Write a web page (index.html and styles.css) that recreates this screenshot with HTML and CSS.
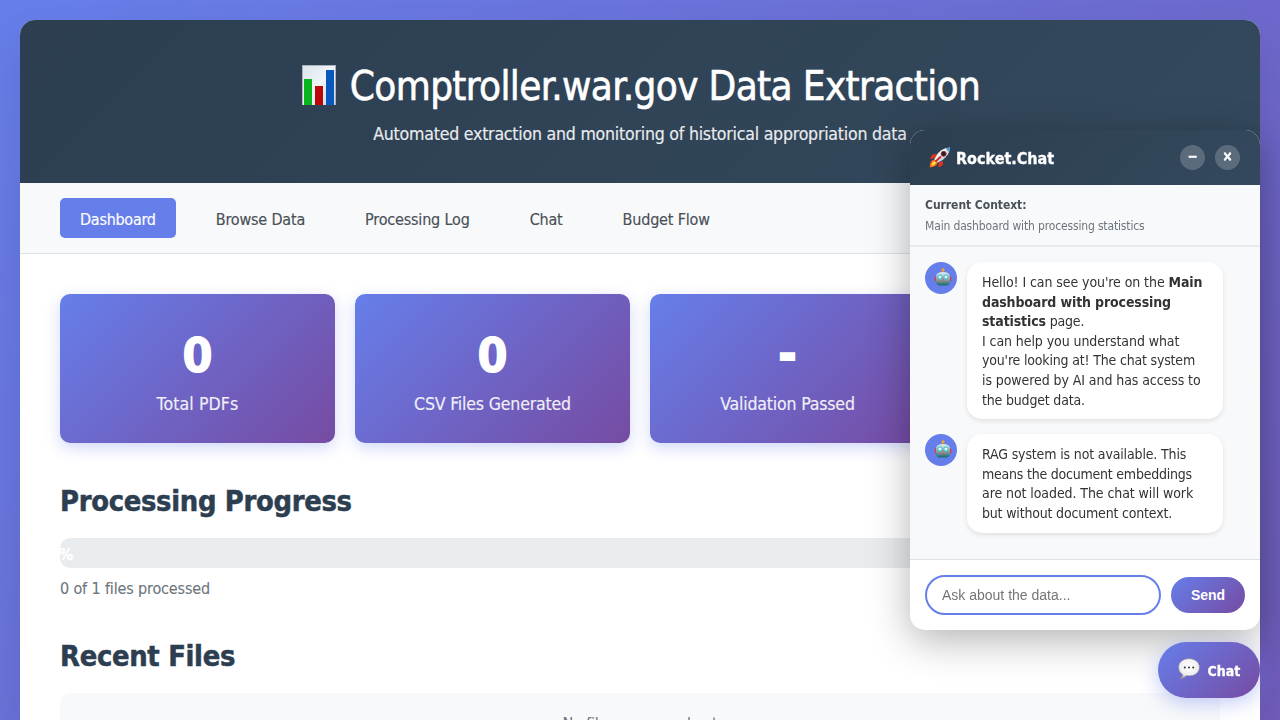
FILE: index.html
```html
<!DOCTYPE html>
<html lang="en">
<head>
<meta charset="utf-8">
<title>Comptroller.war.gov Data Extraction</title>
<link rel="stylesheet" href="styles.css">
</head>
<body>
<svg class="defs" aria-hidden="true">
  <defs>
    <linearGradient id="steel" x1="0" y1="0" x2="0" y2="1"><stop offset="0" stop-color="#e0f0f2"/><stop offset=".5" stop-color="#8fb3ba"/><stop offset="1" stop-color="#17696c"/></linearGradient>
    <linearGradient id="paper" x1="0" y1="0" x2="1" y2="1"><stop offset="0" stop-color="#dce4ec"/><stop offset=".5" stop-color="#f0f4f9"/><stop offset="1" stop-color="#cbd5df"/></linearGradient>
    <linearGradient id="hull" x1="0" y1="0" x2="1" y2="1"><stop offset="0" stop-color="#4d9bd3"/><stop offset=".35" stop-color="#f5f8fa"/><stop offset=".65" stop-color="#c5ced6"/><stop offset="1" stop-color="#3887c2"/></linearGradient>
    <radialGradient id="cloud" cx=".5" cy=".4" r=".6"><stop offset="0" stop-color="#fff"/><stop offset=".75" stop-color="#eee"/><stop offset="1" stop-color="#a9a9a9"/></radialGradient>
    <symbol id="robot" viewBox="0 0 18 18">
      <path d="M9 2v3" stroke="#b9773a" stroke-width="1.5"/><circle cx="9" cy="1.9" r="1.6" fill="#f3a52f"/>
      <rect x=".7" y="8.4" width="2.4" height="5" rx="1" fill="#d3433c"/><rect x="14.9" y="8.4" width="2.4" height="5" rx="1" fill="#d3433c"/>
      <path d="M2.2 7.7C2.6 5 5 3.9 9 3.9s6.400 1.100 6.800 3.800v6.700c0 2-1.700 3-3.800 3H6c-2.100 0-3.800-1-3.800-3z" fill="url(#steel)"/>
      <circle cx="6" cy="9" r="2.100" fill="#e9ffff" stroke="#20b8c8" stroke-width=".9"/><circle cx="12" cy="9" r="2.100" fill="#e9ffff" stroke="#20b8c8" stroke-width=".9"/>
      <path d="M9 9.800l1 1.700H8z" fill="#e34e43"/><path d="M5 13.500h8" stroke="#b96b62" stroke-width="1.500" stroke-dasharray="1.200 .6"/>
    </symbol>
  </defs>
</svg>

<div class="container">
  <header class="header">
    <h1 class="title">
      <svg class="chart-icon" viewBox="0 0 34 40"><rect width="34" height="40" fill="#a8b3bf"/><rect x="1" y="1" width="32" height="39" fill="url(#paper)"/><rect x="2" y="14" width="8" height="26" fill="#08b51c"/><rect x="13" y="21" width="8" height="19" fill="#b90808"/><rect x="24" y="5" width="8" height="35" fill="#0757bd"/></svg>
      <span class="title-text">Comptroller.war.gov Data Extraction</span>
    </h1>
    <p class="subtitle">Automated extraction and monitoring of historical appropriation data</p>
  </header>

  <nav class="nav">
    <a class="nav-link active">Dashboard</a>
    <a class="nav-link">Browse Data</a>
    <a class="nav-link">Processing Log</a>
    <a class="nav-link">Chat</a>
    <a class="nav-link">Budget Flow</a>
  </nav>

  <main class="content">
    <section class="stats">
      <div class="stat"><div class="stat-value">0</div><div class="stat-label loose">Total PDFs</div></div>
      <div class="stat"><div class="stat-value">0</div><div class="stat-label">CSV Files Generated</div></div>
      <div class="stat"><div class="stat-value dash">-</div><div class="stat-label">Validation Passed</div></div>
      <div class="stat"></div>
    </section>

    <section class="progress">
      <h2 class="section-title">Processing Progress</h2>
      <div class="bar"><div class="bar-fill">0%</div></div>
      <p class="bar-note">0 of 1 files processed</p>
    </section>

    <section class="recent">
      <h2 class="section-title">Recent Files</h2>
      <div class="empty">No files processed yet</div>
    </section>
  </main>
</div>

<aside class="chat">
  <div class="chat-header">
    <svg class="rocket" viewBox="0 0 22 21"><path d="M8 7L3.500 7.500.8 12l5-.8zM14 14l-.3 4.300-4.500 2.200.8-5z" fill="#e8321d"/><path d="M5.500 12.500C2 13 1 16 .7 20.300 5 20 8 19 8.500 15.500z" fill="#ff6a14"/><path d="M5.700 14.200C3.600 14.700 2.500 16.500 2.300 18.700 4.600 18.500 6.500 17.500 7 15.500z" fill="#ffe34b"/><path d="M21 .6C15.500.8 11 3.500 8 7.500L5.300 12.600 8.500 15.800 13.800 13C18 9.500 20.700 6 21 .6z" fill="url(#hull)"/><path d="M21 .6l-4.300 1 3.200 3.200z" fill="#3e91cd"/><circle cx="14.600" cy="6.800" r="2.500" fill="#321b20" stroke="#a6323a" stroke-width=".9"/><path d="M12 9.500l-5.500 5" stroke="#c92820" stroke-width="1.700"/></svg>
    <span class="chat-title">Rocket.Chat</span>
    <div class="controls"><span class="control">−</span><span class="control">×</span></div>
  </div>
  <div class="context"><div class="context-title">Current Context:</div><div class="context-text">Main dashboard with processing statistics</div></div>
  <div class="messages">
    <div class="message">
      <div class="avatar"><svg class="robot"><use href="#robot"/></svg></div>
      <div class="bubble"><span class="loose">Hello! I can see you're on the </span><b>Main<br>dashboard with processing<br>statistics</b> page.<br><span class="loose">I can help you understand what</span><br>you're looking at! The chat system<br><span class="loose">is powered by AI and has access to</span><br>the budget data.</div>
    </div>
    <div class="message">
      <div class="avatar"><svg class="robot"><use href="#robot"/></svg></div>
      <div class="bubble"><span class="medium">RAG system is not available. This</span><br><span class="tight">means the document embeddings</span><br><span class="loose">are not loaded. The chat will work</span><br>but without document context.</div>
    </div>
  </div>
  <div class="composer">
    <input class="field" type="text" placeholder="Ask about the data...">
    <button class="send">Send</button>
  </div>
</aside>

<div class="launcher">
  <svg class="bubble-icon" viewBox="0 0 22 22"><path d="M11 .7C5 .7.6 4.300.6 9.300c0 3.200 1.500 5.600 4 7-.1 1.800-.8 3-2.100 4.200 2.600-.3 4.400-1.200 5.700-3 .9.200 1.800.3 2.800.3 6 0 10.400-3.500 10.400-8.500S17 .7 11 .7z" fill="url(#cloud)" stroke="#9b9b9b" stroke-width=".5"/><circle cx="6.800" cy="9.500" r="1" fill="#333"/><circle cx="11" cy="9.500" r="1" fill="#333"/><circle cx="15.200" cy="9.500" r="1" fill="#333"/></svg>
  <span class="launcher-label">Chat</span>
</div>
</body>
</html>
```

FILE: styles.css
```css
* { box-sizing: border-box; margin: 0; padding: 0; }
html { height: 720px; overflow: hidden; }
body {
  height: 720px;
  overflow: hidden;
  padding: 20px;
  font-family: "DejaVu Sans Condensed", "DejaVu Sans", sans-serif;
  font-size: 16px;
  font-variant-ligatures: none;
  background: linear-gradient(135deg, #667eea 0%, #764ba2 100%) 0 0 / 1280px 1750px no-repeat;
}
svg { display: block; flex: none; }
.defs { position: absolute; width: 0; height: 0; }

.container {
  height: 700px;
  background: #fff;
  border-radius: 15px 15px 0 0;
  overflow: hidden;
  box-shadow: 0 20px 40px rgba(0, 0, 0, .1);
}
.header {
  height: 163px;
  padding-top: 38px;
  text-align: center;
  color: #fff;
  background: linear-gradient(135deg, #2c3e50, #34495e);
}
.title {
  display: flex;
  justify-content: center;
  gap: 14px;
  height: 54px;
  padding-left: 2px;
  align-items: center;
  font-size: 40px;
  font-weight: 400;
  letter-spacing: -.63px;
  white-space: nowrap;
  -webkit-text-stroke: .6px #fff;
}
.title-text { padding-top: 2px; }
.chart-icon { width: 34px; height: 40px; }
.subtitle {
  margin-top: 11px;
  font-size: 17.6px;
  line-height: 22px;
  letter-spacing: -.23px;
  -webkit-text-stroke: .15px;
  opacity: .9;
}

.nav {
  display: flex;
  gap: 20px;
  height: 71px;
  padding: 15px 40px;
  background: #f8f9fa;
  border-bottom: 1px solid #dee2e6;
}
.nav-link {
  height: 40px;
  padding: 0 20px;
  border-radius: 5px;
  line-height: 43px;
  letter-spacing: -.18px;
  -webkit-text-stroke: .15px;
  color: #495057;
}
.nav-link.active { background: #667eea; color: #fff; letter-spacing: -.26px; }

.content { padding: 40px; }
.stats { display: grid; grid-template-columns: repeat(4, 1fr); gap: 20px; }
.stat {
  height: 149px;
  padding-top: 30px;
  border-radius: 10px;
  text-align: center;
  color: #fff;
  background: linear-gradient(135deg, #667eea, #764ba2);
  box-shadow: 0 5px 15px rgba(102, 126, 234, .3);
}
.stat-value { height: 62px; font-size: 48px; font-weight: 700; line-height: 62px; -webkit-text-stroke: 1.2px #fff; }
.stat-value.dash { line-height: 58px; -webkit-text-stroke-width: 2px; }
.stat-label {
  margin-top: 7px;
  font-size: 17.6px;
  line-height: 22px;
  letter-spacing: -.19px;
  -webkit-text-stroke: .15px;
  opacity: .9;
}
.stat-label.loose { letter-spacing: .1px; }

.progress { margin-top: 40px; }
.section-title {
  height: 35px;
  font-size: 28.8px;
  font-weight: 700;
  line-height: 37px;
  letter-spacing: -.31px;
  -webkit-text-stroke: .5px;
  color: #2c3e50;
}
.bar {
  height: 30px;
  margin-top: 20px;
  border-radius: 10px;
  overflow: hidden;
  background: #e9ecef;
}
.bar-fill {
  display: flex;
  justify-content: center;
  width: 2px;
  font-weight: 700;
  line-height: 33px;
  -webkit-text-stroke: .3px;
  color: #fff;
}
.bar-note { height: 20px; margin-top: 10px; line-height: 22px; letter-spacing: -.144px; -webkit-text-stroke: .1px; color: #6c757d; }

.recent { margin-top: 40px; }
.empty {
  height: 100px;
  margin-top: 20px;
  padding-top: 21px;
  border-radius: 10px;
  text-align: center;
  line-height: 20px;
  letter-spacing: -.18px;
  color: #6c757d;
  background: #f8f9fa;
}

.chat {
  position: fixed;
  top: 130px;
  right: 20px;
  display: flex;
  flex-direction: column;
  width: 350px;
  height: 500px;
  border-radius: 15px;
  overflow: hidden;
  background: #fff;
  box-shadow: 0 10px 40px rgba(0, 0, 0, .3);
}
.chat-header {
  display: flex;
  align-items: center;
  height: 55px;
  padding: 0 20px 0 19px;
  color: #fff;
  background: linear-gradient(135deg, #2c3e50, #34495e);
}
.rocket { width: 22px; height: 21px; }
.chat-title { margin: 2px 0 0 5px; font-weight: 700; line-height: 20px; -webkit-text-stroke: .3px; }
.controls { display: flex; gap: 10px; margin-left: auto; }
.control {
  width: 25px;
  height: 25px;
  border-radius: 50%;
  text-align: center;
  font-size: 13.3px;
  font-weight: 700;
  line-height: 24px;
  -webkit-text-stroke: .5px;
  background: rgba(255, 255, 255, .2);
}
.context {
  height: 62px;
  padding: 11px 15px 0;
  font-size: 12px;
  background: #f8f9fa;
  border-bottom: 2px solid #e9ecef;
}
.context-title { font-weight: 700; line-height: 18px; letter-spacing: -.04px; color: #495057; }
.context-text { margin-top: 3px; line-height: 18px; letter-spacing: -.153px; color: #6c757d; }
.messages {
  display: flex;
  flex: 1;
  flex-direction: column;
  gap: 15px;
  padding: 15px;
  background: #f8f9fa;
}
.message { display: flex; gap: 10px; }
.avatar {
  display: flex;
  width: 32px;
  height: 32px;
  padding: 6px 0 0 9px;
  border-radius: 50%;
  background: #667eea;
}
.robot { width: 18px; height: 18px; }
.bubble {
  width: 256px;
  padding: 11px 15px 9px;
  border-radius: 15px;
  font-size: 14px;
  line-height: 19.6px;
  letter-spacing: -.18px;
  white-space: nowrap;
  color: #333;
  background: #fff;
  box-shadow: 0 2px 5px rgba(0, 0, 0, .1);
}
.bubble b { letter-spacing: -.131px; }
.bubble .loose { letter-spacing: -.08px; }
.bubble .medium { letter-spacing: -.15px; }
.bubble .tight { letter-spacing: -.22px; }
.composer {
  display: flex;
  gap: 10px;
  align-items: center;
  height: 71px;
  padding: 0 15px;
  border-top: 1px solid #dee2e6;
}
.field {
  width: 236px;
  height: 40px;
  padding: 0 15px;
  border: 2px solid #667eea;
  border-radius: 20px;
  outline: none;
  font: 14px "Liberation Sans", Arial, sans-serif;
}
.field::placeholder { color: #757575; }
.send {
  width: 74px;
  height: 36px;
  border: 0;
  border-radius: 18px;
  font: 700 14px "Liberation Sans", Arial, sans-serif;
  color: #fff;
  background: linear-gradient(135deg, #667eea, #764ba2);
}

.launcher {
  position: fixed;
  right: 20px;
  bottom: 22px;
  display: flex;
  width: 102.500px;
  height: 56.500px;
  padding: 16px 0 0 20px;
  border-radius: 28.250px;
  color: #fff;
  background: linear-gradient(135deg, #667eea, #764ba2);
  box-shadow: 0 5px 20px rgba(102, 126, 234, .4);
}
.bubble-icon { width: 22px; height: 22px; }
.launcher-label {
  margin: 4px 0 0 8px;
  font-size: 14px;
  font-weight: 700;
  line-height: 18px;
  -webkit-text-stroke: .3px;
}
```
